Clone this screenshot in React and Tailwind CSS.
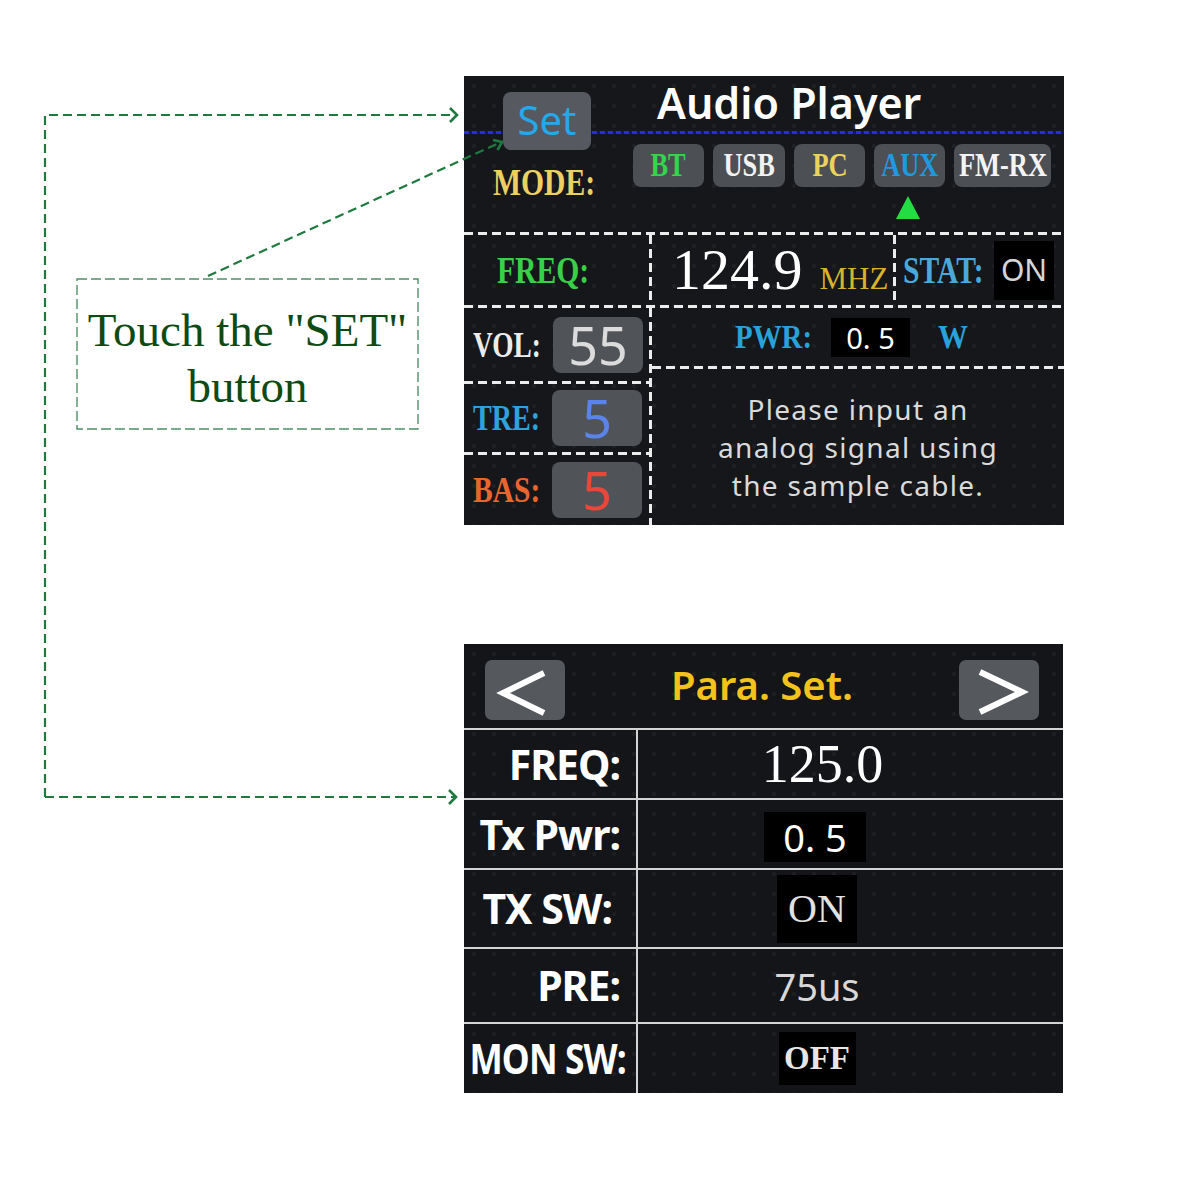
import React from "react";

const serifB = "font-['Liberation_Serif',serif] font-bold";
const serif = "font-['Liberation_Serif',serif]";
const sans = "font-['Noto_Sans',sans-serif]";
const dots =
  "bg-[radial-gradient(rgba(255,255,255,0.045)_1.5px,transparent_2.5px)] bg-[length:20px_20px]";

function HDash() {
  return (
    <div className="h-[3px] w-full shrink-0 bg-[repeating-linear-gradient(90deg,#ececec_0_9px,transparent_9px_14px)]" />
  );
}

function VDash() {
  return (
    <div className="w-[3px] self-stretch shrink-0 bg-[repeating-linear-gradient(180deg,#ececec_0_9px,transparent_9px_14px)]" />
  );
}

const modes = [
  { t: "BT", c: "text-[#34d44b]", w: "w-[71px]" },
  { t: "USB", c: "text-[#f2f2f2]", w: "w-[72px]" },
  { t: "PC", c: "text-[#e9d35c]", w: "w-[71px]" },
  { t: "AUX", c: "text-[#1e9be0]", w: "w-[71px]" },
  { t: "FM-RX", c: "text-[#f4f4f4]", w: "w-[97px]" },
];

function ValueBox({ children, color }) {
  return (
    <div className="w-[90px] h-[56px] shrink-0 rounded-[8px] bg-[#505358] flex items-center justify-center">
      <span className={`${sans} text-[52px] leading-none ${color}`}>{children}</span>
    </div>
  );
}

function AudioPlayer() {
  return (
    <div className={`w-[600px] h-[449px] bg-[#15171b] ${dots} flex flex-col`}>
      {/* title strip */}
      <div className="relative h-[156px] flex shrink-0">
        <div className="absolute left-0 right-0 top-[55px] h-[3px] bg-[repeating-linear-gradient(90deg,#2a2ae0_0_5px,#12127a_5px_8px)]" />
        <div className="relative w-[169px] shrink-0 flex flex-col pt-[16px]">
          <div className="ml-[39px] w-[88px] h-[58px] rounded-[8px] bg-[#56595f] flex items-center justify-center">
            <span className={`${sans} text-[40px] leading-none text-[#25a8ea] -mt-[3px]`}>Set</span>
          </div>
          <div className="ml-[29px] mt-[13px] leading-none">
            <span className={`${serifB} text-[38px] leading-none inline-block origin-left scale-x-[0.78] text-[#ecd062] whitespace-nowrap`}>
              MODE:
            </span>
          </div>
        </div>
        <div className="relative flex flex-col">
          <div className={`ml-[24px] mt-[5px] ${sans} font-semibold text-[43px] leading-none text-white whitespace-nowrap`}>
            Audio Player
          </div>
          <div className="mt-[20px] flex gap-[9px]">
            {modes.map((m) => (
              <div
                key={m.t}
                className={`${m.w} h-[43px] shrink-0 rounded-[8px] bg-[#4c4f54] flex items-center justify-center`}
              >
                <span className={`${serifB} text-[33px] leading-none inline-block scale-x-[0.8] whitespace-nowrap ${m.c}`}>
                  {m.t}
                </span>
              </div>
            ))}
          </div>
          <div className="ml-[263px] mt-[9px] w-0 h-0 border-x-[12px] border-x-transparent border-b-[23px] border-b-[#22dd44]" />
        </div>
      </div>

      <HDash />

      {/* frequency row */}
      <div className="h-[70px] flex shrink-0">
        <div className="w-[185px] shrink-0 flex items-center pl-[33px]">
          <span className={`${serifB} text-[38px] leading-none inline-block origin-left scale-x-[0.78] text-[#38d048]`}>
            FREQ:
          </span>
        </div>
        <VDash />
        <div className="w-[241px] shrink-0 flex items-center pl-[20px]">
          <div className="flex items-baseline">
            <span className={`${serif} text-[58px] leading-none text-white`}>124.9</span>
            <span className={`${serif} text-[31px] leading-none text-[#d8b42c] ml-[17px]`}>MHZ</span>
          </div>
        </div>
        <VDash />
        <div className="flex-1 min-w-0 flex items-center pl-[7px] pr-[10px]">
          <div className="w-[86px] shrink-0 leading-none whitespace-nowrap">
            <span className={`${serifB} text-[37px] leading-none inline-block origin-left scale-x-[0.8] text-[#4aa9dc]`}>
              STAT:
            </span>
          </div>
          <div className="ml-auto w-[60px] h-[59px] shrink-0 bg-black flex items-center justify-center">
            <span className={`${sans} text-[30px] leading-none text-[#d6d6d6]`}>ON</span>
          </div>
        </div>
      </div>

      <HDash />

      <div className="flex flex-1">
        <div className="w-[185px] flex flex-col shrink-0">
          <div className="h-[73px] flex items-center pl-[9px]">
            <div className="w-[80px] shrink-0 leading-none">
              <span className={`${serifB} text-[36px] leading-none inline-block origin-left scale-x-[0.76] text-[#ececec]`}>
                VOL:
              </span>
            </div>
            <ValueBox color="text-[#dcdcdc]">55</ValueBox>
          </div>
          <HDash />
          <div className="h-[68px] flex items-center pl-[9px]">
            <div className="w-[79px] shrink-0 leading-none">
              <span className={`${serifB} text-[36px] leading-none inline-block origin-left scale-x-[0.78] text-[#2ea2da]`}>
                TRE:
              </span>
            </div>
            <ValueBox color="text-[#5b84ea]">5</ValueBox>
          </div>
          <HDash />
          <div className="h-[70px] flex items-center pl-[9px]">
            <div className="w-[79px] shrink-0 leading-none">
              <span className={`${serifB} text-[36px] leading-none inline-block origin-left scale-x-[0.82] text-[#e8662e]`}>
                BAS:
              </span>
            </div>
            <ValueBox color="text-[#e8483a]">5</ValueBox>
          </div>
        </div>
        <VDash />
        <div className="flex-1 min-w-0 flex flex-col">
          <div className="h-[58px] flex items-center pl-[83px]">
            <div className="w-[96px] shrink-0 leading-none">
              <span className={`${serifB} text-[34px] leading-none inline-block origin-left scale-x-[0.85] text-[#28a2da]`}>
                PWR:
              </span>
            </div>
            <div className="w-[79px] h-[39px] shrink-0 bg-black flex items-center justify-center">
              <span className={`${sans} text-[29px] leading-none text-white`}>0.&nbsp;5</span>
            </div>
            <span className={`${serifB} text-[34px] leading-none inline-block origin-left scale-x-[0.88] text-[#28a2da] ml-[28px]`}>
              W
            </span>
          </div>
          <HDash />
          <div className="flex-1 flex items-center justify-center">
            <p className={`${sans} text-[28px] leading-[38px] tracking-[1.3px] text-center text-[#dadada]`}>
              Please input an
              <br />
              analog signal using
              <br />
              the sample cable.
            </p>
          </div>
        </div>
      </div>
    </div>
  );
}

function NavButton({ dir }) {
  return (
    <div className="w-[80px] h-[60px] shrink-0 rounded-[7px] bg-[#55585d] flex items-center justify-center">
      <svg width="80" height="60" viewBox="0 0 80 60">
        {dir === "left" ? (
          <polyline points="59,13 18,33 59,53" fill="none" stroke="#fff" strokeWidth="6" strokeLinejoin="miter" />
        ) : (
          <polyline points="21,12 63,32 21,52" fill="none" stroke="#fff" strokeWidth="6" strokeLinejoin="miter" />
        )}
      </svg>
    </div>
  );
}

const params = [
  {
    label: "FREQ:",
    h: "h-[70px]",
    lab: "pr-[16px]",
    sc: "",
    value: <span className={`${serif} text-[54px] leading-none text-white ml-[11px]`}>125.0</span>,
  },
  {
    label: "Tx Pwr:",
    h: "h-[70px]",
    lab: "pr-[16px]",
    sc: "",
    value: (
      <div className="w-[102px] h-[50px] bg-black flex items-center justify-center mt-[6px] -ml-[4px]">
        <span className={`${sans} text-[38px] leading-none text-white`}>0.&nbsp;5</span>
      </div>
    ),
  },
  {
    label: "TX SW:",
    h: "h-[79px]",
    lab: "pr-[24px]",
    sc: "",
    value: (
      <div className="w-[80px] h-[68px] bg-black flex items-center justify-center">
        <span className={`${serif} text-[40px] leading-none text-[#e2e2e2]`}>ON</span>
      </div>
    ),
  },
  {
    label: "PRE:",
    h: "h-[75px]",
    lab: "pr-[16px]",
    sc: "",
    value: <span className={`${sans} text-[38px] leading-none text-[#d8d8d8]`}>75us</span>,
  },
  {
    label: "MON SW:",
    h: "h-[71px]",
    lab: "pr-[10px]",
    sc: "origin-right scale-x-[0.86]",
    value: (
      <div className="w-[77px] h-[53px] bg-black flex items-center justify-center">
        <span className={`${serifB} text-[33px] leading-none text-[#e6e6e6]`}>OFF</span>
      </div>
    ),
  },
];

function ParaSet() {
  return (
    <div className={`w-[599px] h-[449px] bg-[#131519] ${dots} flex flex-col`}>
      <div className="h-[84px] shrink-0 flex items-start justify-between pt-[16px] pl-[21px] pr-[24px]">
        <NavButton dir="left" />
        <span className={`${sans} font-semibold text-[40px] leading-none text-[#f2c31a] mt-[5px]`}>Para. Set.</span>
        <NavButton dir="right" />
      </div>
      {params.map((p) => (
        <div key={p.label} className={`${p.h} shrink-0 flex border-t-2 border-[#d4d4d4]`}>
          <div
            className={`w-[174px] shrink-0 border-r-2 border-[#d4d4d4] flex items-center justify-end overflow-visible ${p.lab}`}
          >
            <span
              className={`${sans} font-bold text-[41px] leading-none tracking-[-1px] text-white whitespace-nowrap inline-block ${p.sc}`}
            >
              {p.label}
            </span>
          </div>
          <div className="flex-1 flex items-center justify-center pr-[67px]">{p.value}</div>
        </div>
      ))}
    </div>
  );
}

function Connectors() {
  const c = "#1f7a3f";
  return (
    <svg className="absolute inset-0 pointer-events-none" width="1200" height="1200" viewBox="0 0 1200 1200">
      <g fill="none" stroke={c} strokeWidth="2.2">
        <path d="M45 797 V115 H455" strokeDasharray="9 5" />
        <path d="M45 797 H454" strokeDasharray="9 5" />
        <path d="M208 276 L499 143" strokeDasharray="9 5" />
        <polyline points="450,108 457,115 450,122" strokeWidth="2.6" />
        <polyline points="449,790 456,797 449,804" strokeWidth="2.6" />
        <polyline points="493,140 502,142 497.5,150" strokeWidth="2.6" />
      </g>
    </svg>
  );
}

export default function App() {
  return (
    <div className="relative w-[1200px] h-[1200px] bg-white flex overflow-hidden">
      <div className="w-[464px] shrink-0 pt-[278px] pl-[76px]">
        <div className="relative w-[343px] h-[152px] pt-[24px] text-center">
          <svg className="absolute inset-0" width="343" height="152" viewBox="0 0 343 152">
            <rect x="1" y="1" width="341" height="150" fill="none" stroke="#4d8f68" strokeWidth="1.4" strokeDasharray="10 4" />
          </svg>
          <p className={`relative ${serif} text-[47px] leading-[56px] text-[#0e4a14]`}>
            Touch the "SET"
            <br />
            button
          </p>
        </div>
      </div>
      <div className="pt-[76px] flex flex-col">
        <AudioPlayer />
        <div className="mt-[119px]">
          <ParaSet />
        </div>
      </div>
      <Connectors />
    </div>
  );
}
